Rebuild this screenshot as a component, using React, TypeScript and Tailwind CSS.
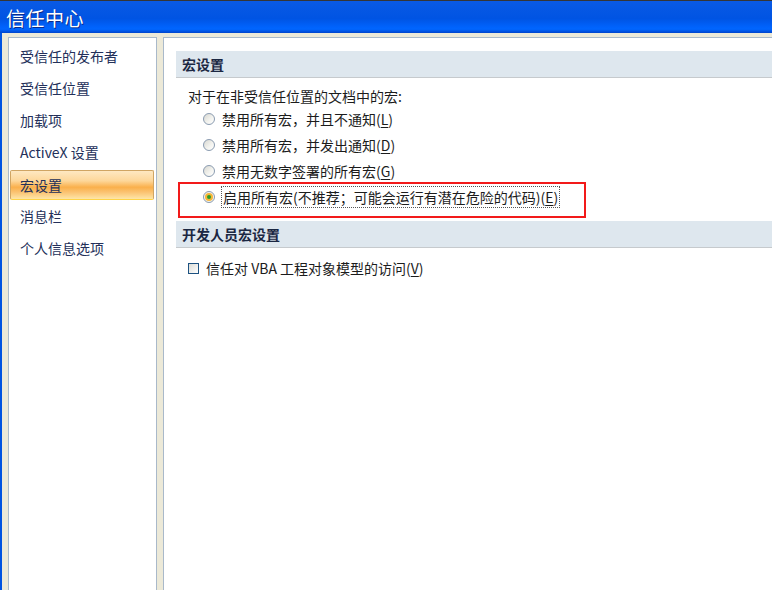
import React from "react";

const navItems = [
  "受信任的发布者",
  "受信任位置",
  "加载项",
  "ActiveX 设置",
  "宏设置",
  "消息栏",
  "个人信息选项",
];

function Radio({ checked }: { checked?: boolean }) {
  if (checked) {
    return (
      <div className="w-[12px] h-[12px] rounded-full border border-[#8a9bb0] bg-[#f4f4f0] flex items-center justify-center shrink-0">
        <div className="w-[8px] h-[8px] rounded-full bg-[#f5b53a] flex items-center justify-center">
          <div className="w-[4px] h-[4px] rounded-full bg-[#2a9d2a]" />
        </div>
      </div>
    );
  }
  return (
    <div className="w-[12px] h-[12px] rounded-full border border-[#8a9bb0] bg-[linear-gradient(135deg,#d8d8d2_0%,#f4f4f0_60%,#ffffff_100%)] shrink-0" />
  );
}

// label with an underlined access key, e.g. (L)
function Label({ text, hotkey }: { text: string; hotkey: string }) {
  return (
    <span>
      {text}(<span className="underline underline-offset-2">{hotkey}</span>)
    </span>
  );
}

function SectionHeader({ title }: { title: string }) {
  return (
    <div className="h-[27px] bg-[#dee7ee] border-b border-[#c6cacd] flex items-center pl-[6px] text-[14px] font-bold text-[#1b2742]">
      {title}
    </div>
  );
}

export default function App() {
  return (
    <div className="w-[772px] h-[590px] overflow-hidden bg-[#ece9d8] flex flex-col font-['Noto_Sans_CJK_SC','Microsoft_YaHei',sans-serif] leading-none">
      <div className="h-px bg-[#353535]" />
      {/* Title bar */}
      <div className="h-[32px] bg-[linear-gradient(to_bottom,#0a5ae4_0%,#0054e3_55%,#0062fb_80%,#0066ff_88%,#0044cc_100%)] flex items-center pl-[6px]">
        <span className="text-white text-[19px] tracking-[0.5px] [text-shadow:1px_1px_0_#0a2a8a]">
          信任中心
        </span>
      </div>

      <div className="flex-1 min-h-0 flex border-l-2 border-[#0053e1] pt-[4px] pl-[6px] gap-[6px]">
        {/* Left nav */}
        <div className="w-[149px] bg-white border border-b-0 border-[#a9b9ca] pt-[2px]">
          {navItems.map((item) =>
            item === "宏设置" ? (
              <div key={item} className="h-[32px] pt-[2px] pl-[1px] pr-[2px]">
                <div className="h-[30px] rounded-[2px] border border-[#d0a563] border-b-[#ffd448] bg-[linear-gradient(to_bottom,#fee8c2_0%,#fdd79a_35%,#fab04c_58%,#fbc270_75%,#fee6a8_100%)] flex items-center pl-[9px] text-[14px] text-[#23305a]">
                  {item}
                </div>
              </div>
            ) : (
              <div
                key={item}
                className="h-[32px] flex items-center pl-[11px] text-[14px] text-[#23305a]"
              >
                {item}
              </div>
            )
          )}
        </div>

        {/* Right content */}
        <div className="flex-1 bg-white border-l border-t border-[#a9b9ca] pt-[13px] pl-[12px] text-[14px] text-[#1c1c1c]">
          <SectionHeader title="宏设置" />

          <div className="mt-[8px] h-[20px] flex items-center pl-[12px]">
            对于在非受信任位置的文档中的宏:
          </div>

          <div className="h-[26px] flex items-center pl-[27px] gap-[7px]">
            <Radio />
            <Label text="禁用所有宏，并且不通知" hotkey="L" />
          </div>
          <div className="h-[26px] flex items-center pl-[27px] gap-[7px]">
            <Radio />
            <Label text="禁用所有宏，并发出通知" hotkey="D" />
          </div>
          <div className="h-[26px] flex items-center pl-[27px] gap-[7px]">
            <Radio />
            <Label text="禁用无数字签署的所有宏" hotkey="G" />
          </div>

          {/* highlighted option */}
          <div className="mt-[-2px] ml-[2px] w-[408px] h-[36px] border-2 border-[#f21a1a] pl-[23px] pb-[8px]">
            <div className="h-[26px] flex items-center gap-[6px]">
              <Radio checked />
              <span className="border border-dotted border-[#555] px-[1px] h-[22px] flex items-center">
                <Label text="启用所有宏(不推荐；可能会运行有潜在危险的代码)" hotkey="E" />
              </span>
            </div>
          </div>

          <div className="mt-[3px]">
            <SectionHeader title="开发人员宏设置" />
          </div>

          <div className="mt-[8px] h-[24px] flex items-center pl-[12px] gap-[7px]">
            <div className="w-[11px] h-[11px] border border-[#1d5281] bg-[linear-gradient(135deg,#dcdcd6_0%,#ffffff_100%)] shrink-0" />
            <Label text="信任对 VBA 工程对象模型的访问" hotkey="V" />
          </div>
        </div>
      </div>
    </div>
  );
}
